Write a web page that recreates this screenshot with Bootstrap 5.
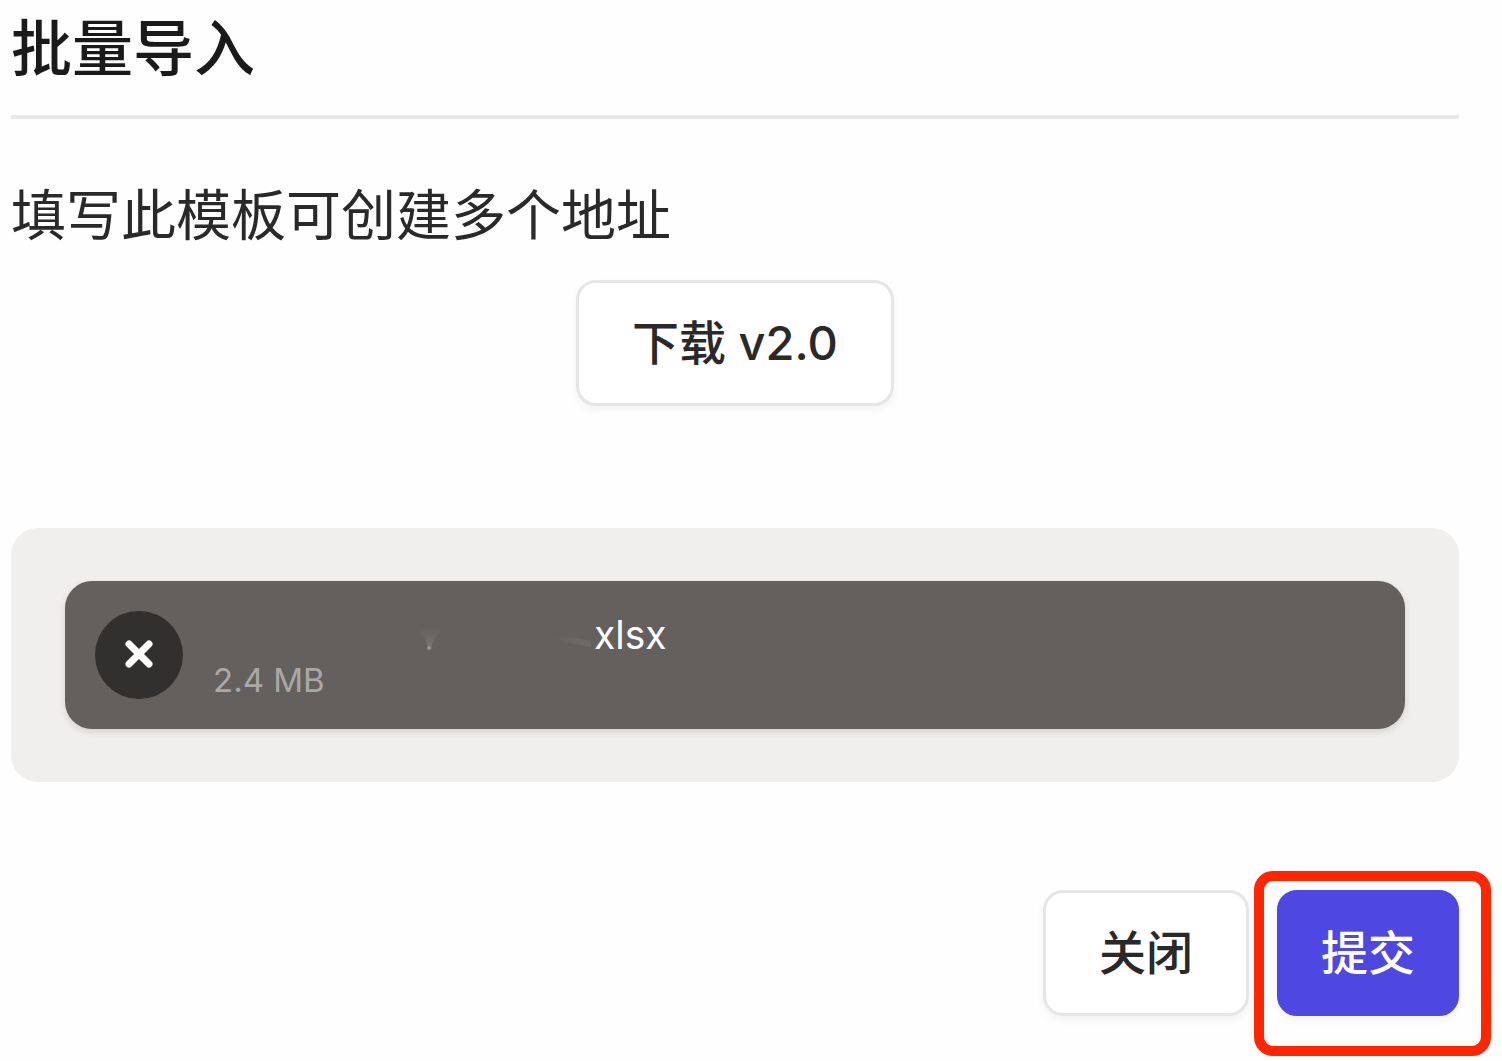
<!DOCTYPE html>
<html lang="zh-CN">
<head>
<meta charset="utf-8">
<meta name="viewport" content="width=device-width, initial-scale=1">
<title>批量导入</title>
<link href="https://cdn.jsdelivr.net/npm/bootstrap@5.3.0/dist/css/bootstrap.min.css" rel="stylesheet">
<style>
  body { font-family: Inter, "Noto Sans CJK SC", sans-serif; color: #292929; background: #fefefe; }
  .import-dialog { padding: 0 43px 44px 11px; }
  .dialog-title { font-size: 61px; line-height: 99px; font-weight: 500; color: #1a1a1a; padding-bottom: 16px; border-bottom: 4px solid #e8e8e8; }
  .dialog-hint { font-size: 55px; line-height: 80px; margin-top: 56px; }
  .dialog-btn { --bs-btn-font-size: 47px; --bs-btn-line-height: 72px; --bs-btn-font-weight: 500; --bs-btn-padding-y: 24px; --bs-btn-padding-x: 53px; --bs-btn-border-width: 3px; --bs-btn-border-radius: 20px;
    --bs-btn-color: #292929; --bs-btn-bg: #fff; --bs-btn-border-color: #e6e6e6; --bs-btn-hover-bg: #f7f7f7; --bs-btn-hover-border-color: #e6e6e6; box-shadow: 0 4px 8px rgba(0,0,0,.05); }
  .dialog-btn-main { --bs-btn-padding-x: 41px; --bs-btn-color: #fff; --bs-btn-bg: #4e47e2; --bs-btn-border-color: #4e47e2; --bs-btn-hover-color: #fff; --bs-btn-hover-bg: #433cc9; --bs-btn-hover-border-color: #433cc9; }
  .download-row { margin-top: 25px; }
  .upload-area { margin-top: 122px; padding: 53px 54px; border-radius: 27px; background: #f0efed; }
  .upload-file { padding: 30px 30px 28px; gap: 30px; border-radius: 27px; background: #64605d; box-shadow: 0 3px 7px rgba(0,0,0,.12); }
  .file-remove { width: 88px; height: 88px; background: #31302e; }
  .file-name { font-size: 39px; line-height: 48px; color: #fff; }
  .name-smudge { width: 381px; height: 48px; }
  .file-size { font-size: 33px; line-height: 42px; color: #aaa8a6; }
  .dialog-actions { margin-top: 108px; gap: 28px; }
  .submit-frame { top: -19px; left: -23px; right: -32px; bottom: -40px; border: 10px solid #ff2600; border-radius: 19px; pointer-events: none; }
</style>
<script src="https://cdn.jsdelivr.net/npm/bootstrap@5.3.0/dist/js/bootstrap.bundle.min.js"></script>
</head>
<body>
<main class="import-dialog">
  <h1 class="dialog-title mb-0">批量导入</h1>
  <p class="dialog-hint mb-0">填写此模板可创建多个地址</p>
  <div class="download-row d-flex justify-content-center">
    <button type="button" class="btn dialog-btn">下载 v2.0</button>
  </div>
  <section class="upload-area">
    <div class="upload-file d-flex align-items-start">
      <button type="button" class="file-remove btn border-0 rounded-circle p-0 d-flex align-items-center justify-content-center flex-shrink-0" aria-label="移除">
        <svg width="30" height="30" viewBox="0 0 30 30" fill="none" stroke="#fff" stroke-width="7" stroke-linecap="round" aria-hidden="true"><path d="M5 4L25 24M25 4L5 24"/></svg>
      </button>
      <div>
        <div class="file-name d-flex">
          <svg class="name-smudge" viewBox="0 0 381 48" aria-hidden="true">
            <defs>
              <linearGradient id="fade" x1="0" y1="0" x2="0" y2="1"><stop offset="0" stop-color="#716d6a" stop-opacity="0"/><stop offset="1" stop-color="#7d7976"/></linearGradient>
              <linearGradient id="trail"><stop offset="0" stop-color="#6e6a67" stop-opacity="0"/><stop offset="1" stop-color="#6e6a67"/></linearGradient>
            </defs>
            <path d="M203 16Q217 18 232 16Q220 26 218 38H215Q213 26 203 16Z" fill="url(#fade)"/>
            <circle cx="216" cy="37" r="2" fill="#96928f"/>
            <path d="M336 28Q356 24 378 30V36Q356 32 336 28Z" fill="url(#trail)"/>
          </svg>
          <span>xlsx</span>
        </div>
        <div class="file-size mb-n1">2.4 MB</div>
      </div>
    </div>
  </section>
  <div class="dialog-actions d-flex justify-content-end">
    <button type="button" class="btn dialog-btn">关闭</button>
    <div class="position-relative">
      <button type="submit" class="btn dialog-btn dialog-btn-main">提交</button>
      <div class="submit-frame position-absolute"></div>
    </div>
  </div>
</main>
</body>
</html>
